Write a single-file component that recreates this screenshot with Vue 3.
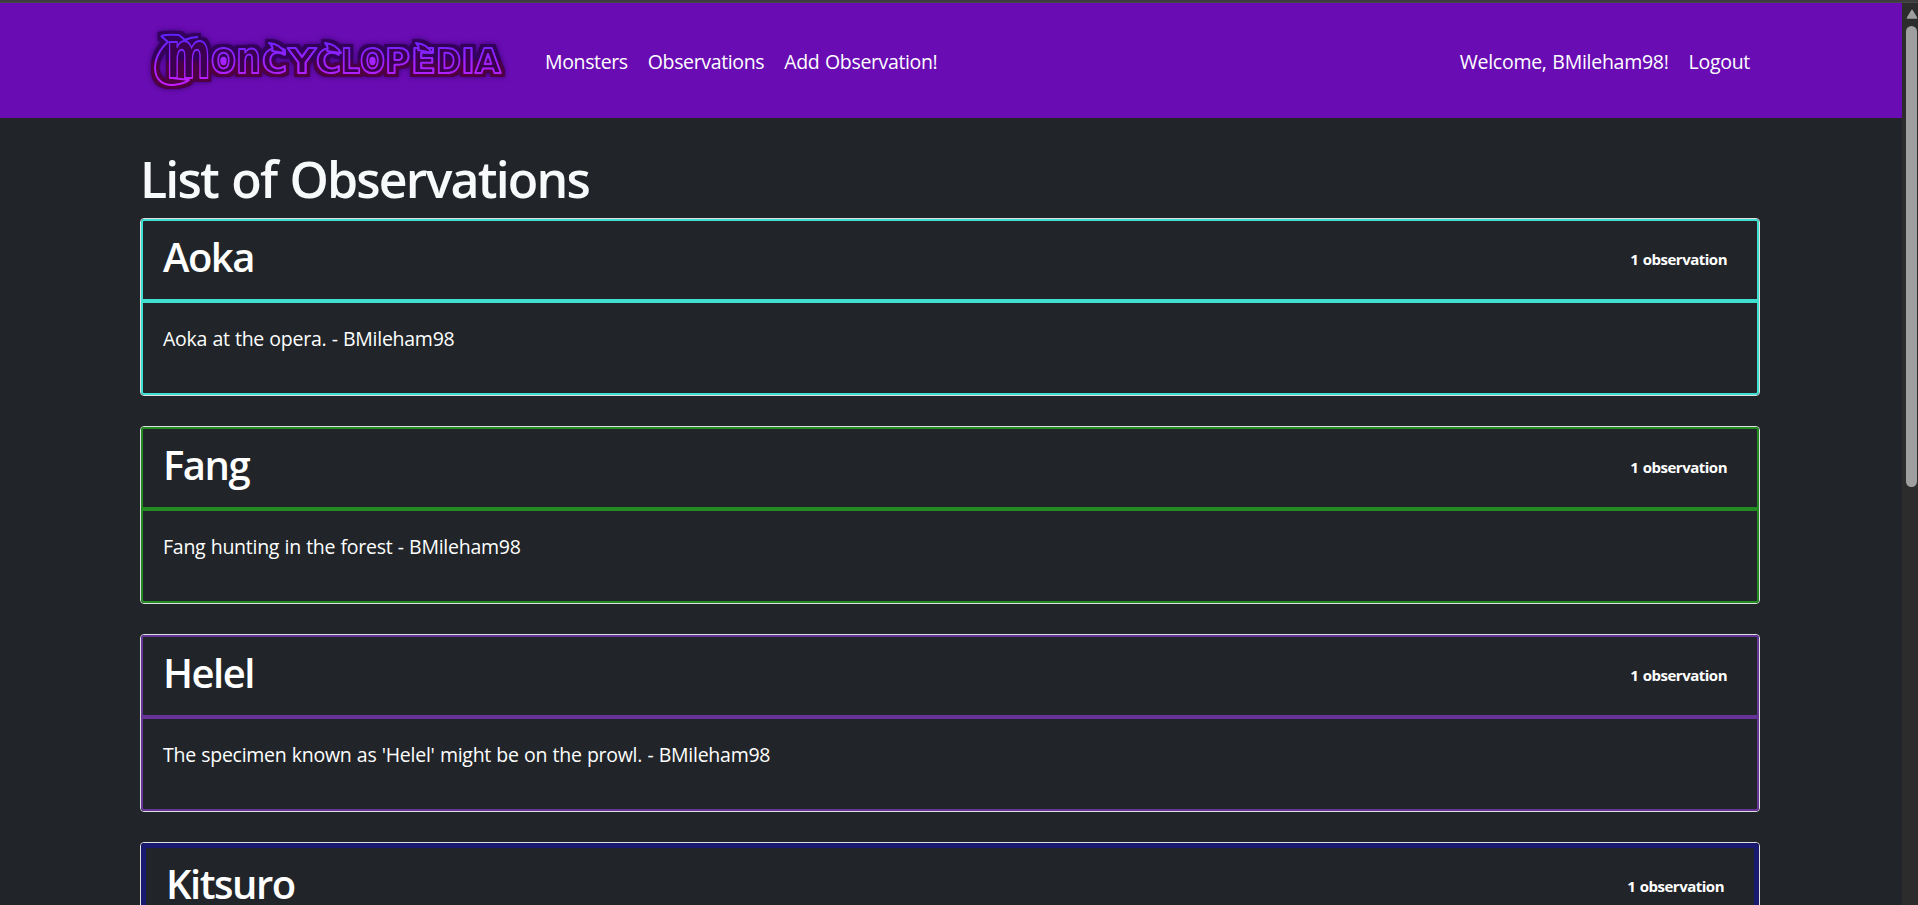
<script setup>
const observed = [
  { name: 'Aoka', tone: 'turquoise', note: 'Aoka at the opera. - BMileham98' },
  { name: 'Fang', tone: 'green', note: 'Fang hunting in the forest - BMileham98' },
  { name: 'Helel', tone: 'purple', note: "The specimen known as 'Helel' might be on the prowl. - BMileham98" },
  { name: 'Kitsuro', tone: 'navy', note: '' },
]

// Wordmark letters: character, left edge, advance width, optional font size
const letters = [
  { c: 'O', x: 81, w: 25 },
  { c: 'n', x: 106, w: 25, s: 44 },
  { c: 'C', x: 132, w: 25 },
  { c: 'Y', x: 158, w: 28 },
  { c: 'C', x: 186, w: 25 },
  { c: 'L', x: 211, w: 19 },
  { c: 'O', x: 230, w: 25 },
  { c: 'P', x: 255, w: 25 },
  { c: 'E', x: 281, w: 25 },
  { c: 'D', x: 306, w: 25 },
  { c: 'I', x: 331, w: 14 },
  { c: 'A', x: 345, w: 26 },
]
const horns = [
  'M142 51 Q144 47 139 43 Q150 44 155 53 Z',
  'M197 51 Q199 47 195 43 Q206 44 211 53 Z',
  'M288 50 Q290 47 286 43 Q297 44 302 53 Z',
]
</script>

<template>
  <div class="page">
    <div class="strip"></div>
    <div class="viewport">
      <div class="document">
        <nav class="navbar">
          <svg class="logo" width="400" height="115" viewBox="0 3 400 115" role="img" aria-label="Moncyclopedia">
            <defs>
              <linearGradient id="neon" gradientUnits="userSpaceOnUse" x1="0" y1="34" x2="0" y2="86">
                <stop offset="0" stop-color="#5a22ff" />
                <stop offset="0.5" stop-color="#9b22ff" />
                <stop offset="1" stop-color="#c41cff" />
              </linearGradient>
              <filter id="outline" filterUnits="userSpaceOnUse" x="0" y="10" width="400" height="100" color-interpolation-filters="sRGB">
                <feMorphology in="SourceAlpha" operator="dilate" radius="3" result="grown" />
                <feGaussianBlur in="grown" stdDeviation="0.7" result="rim" />
                <feGaussianBlur in="grown" stdDeviation="2.6" result="halo" />
                <feFlood flood-color="#2b0060" flood-opacity="0.85" />
                <feComposite in2="halo" operator="in" result="haloFill" />
                <feFlood flood-color="#33005a" />
                <feComposite in2="rim" operator="in" result="rimTop" />
                <feFlood flood-color="#4f0040" y="60" height="50" result="wine" />
                <feGaussianBlur in="wine" stdDeviation="0 6" />
                <feComposite in2="rim" operator="in" result="rimLow" />
                <feMerge>
                  <feMergeNode in="haloFill" />
                  <feMergeNode in="rimTop" />
                  <feMergeNode in="rimLow" />
                  <feMergeNode in="SourceGraphic" />
                </feMerge>
              </filter>
            </defs>
            <g class="face" filter="url(#outline)">
              <path class="swash" d="M31 36 Q37 34 49 35 L55 40 Q61 37 68 37 M31 36 L38 42 C20 57 20 86 43 85 Q54 84 59 80 L42 78" />
              <text class="initial" x="36" y="77.5" font-size="66" textLength="45" lengthAdjust="spacingAndGlyphs">m</text>
              <text
                v-for="(l, i) in letters"
                :key="i"
                :x="l.x"
                y="73"
                :font-size="l.s || 34"
                :textLength="l.w"
                lengthAdjust="spacingAndGlyphs"
              >{{ l.c }}</text>
              <path v-for="h in horns" :key="h" :d="h" />
              <ellipse cx="93.5" cy="61" rx="3.2" ry="4.2" />
              <ellipse cx="242.5" cy="61" rx="3.2" ry="4.2" />
            </g>
          </svg>
          <div class="links">
            <a>Monsters</a>
            <a>Observations</a>
            <a>Add Observation!</a>
          </div>
          <div class="links account">
            <span>Welcome, BMileham98!</span>
            <a>Logout</a>
          </div>
        </nav>
        <main class="container">
          <h1>List of Observations</h1>
          <section v-for="o in observed" :key="o.name" class="card" :class="o.tone">
            <header class="card-head">
              <h2>{{ o.name }}</h2>
              <span class="count">1 observation</span>
            </header>
            <div class="card-body">{{ o.note }}</div>
          </section>
        </main>
      </div>
      <div class="scrollbar">
        <svg width="12" height="10" viewBox="0 0 12 10"><path d="M1.5 9 6 1.5 10.5 9Z" /></svg>
        <div class="thumb"></div>
      </div>
    </div>
  </div>
</template>

<style>
body {
  overflow: hidden;
  background: #212529;
}
</style>

<style scoped>
.page {
  height: 905px;
  overflow: hidden;
  display: flex;
  flex-direction: column;
  font-family: 'Open Sans', 'Noto Sans', sans-serif;
  font-size: 19.5px;
  letter-spacing: -0.26px;
  word-spacing: 0.5px;
  color: #fff;
  background: #212529;
}
.strip {
  flex: none;
  height: 2px;
  background: #3c3c3c;
  border-bottom: 1px solid #484848;
}
.viewport {
  flex: 1;
  min-height: 0;
  display: flex;
}
.document {
  flex: 1;
  overflow: hidden;
}
.navbar {
  height: 115px;
  box-sizing: border-box;
  display: flex;
  align-items: center;
  padding: 0 152px 0 130px;
  background: #690cb3;
}
.logo {
  flex: none;
  margin-right: 15px;
}
.links {
  display: flex;
  gap: 20px;
  padding-top: 2px;
  line-height: 30px;
  letter-spacing: -0.36px;
  word-spacing: 1px;
  white-space: nowrap;
}
.account {
  margin-left: auto;
  letter-spacing: -0.28px;
}
.logo text {
  font-family: 'DejaVu Sans', sans-serif;
  font-weight: bold;
  letter-spacing: 0;
  word-spacing: 0;
}
.face {
  fill: #3d0050;
  stroke: url(#neon);
  stroke-width: 2;
  stroke-linejoin: round;
}
.logo .swash {
  fill: none;
}
.logo ellipse {
  fill: #a322ff;
  stroke: none;
}
.container {
  width: 1620px;
  margin-left: 140px;
}
h1,
h2 {
  margin: 0;
  font-weight: 600;
}
h1 {
  padding-top: 31px;
  height: 69px;
  line-height: 61px;
  font-size: 50px;
  letter-spacing: -1.8px;
  word-spacing: 2px;
  color: #f8f9fa;
}
.card {
  --line: 2px;
  height: 178px;
  box-sizing: border-box;
  margin-bottom: 30px;
  display: flex;
  flex-direction: column;
  border: 1px solid #dfdfdf;
  border-radius: 4px;
}
.card-head {
  height: 82px;
  box-sizing: border-box;
  display: flex;
  align-items: flex-start;
  justify-content: space-between;
  padding: 11px 30px 0 20px;
  border: var(--line) solid var(--tone);
  border-radius: 3px 3px 0 0;
}
.card-body {
  flex: 1;
  padding: 21px 20px 19px;
  line-height: 30px;
  border: var(--line) solid var(--tone);
  border-radius: 0 0 3px 3px;
}
.navy .card-head {
  height: 88px;
}
h2 {
  line-height: 49px;
  font-size: 40px;
  letter-spacing: -1.5px;
}
.count {
  margin-top: 17px;
  line-height: 20px;
  font-size: 15px;
  font-weight: 700;
  letter-spacing: -0.5px;
  word-spacing: 1px;
}
.turquoise { --tone: #40e0d0; }
.green { --tone: #228b22; }
.purple { --tone: #663399; }
.navy { --tone: #191970; }
.card.navy { --line: 5px; }
.scrollbar {
  flex: none;
  width: 16px;
  box-sizing: border-box;
  padding: 6px 0 0 4px;
  background: #2c2c2c;
}
.scrollbar svg {
  display: block;
  width: 12px;
  height: 10px;
  fill: #9f9f9f;
  stroke: #9f9f9f;
  stroke-width: 1.5;
  stroke-linejoin: round;
}
.thumb {
  margin-top: 7px;
  width: 11px;
  height: 461px;
  border-radius: 6px;
  background: #9f9f9f;
}
</style>
